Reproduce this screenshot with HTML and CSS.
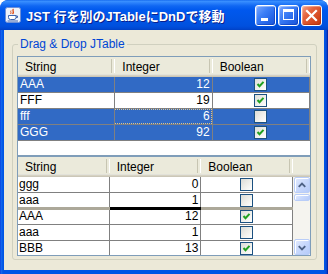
FILE: index.html
```html
<!DOCTYPE html>
<html lang="ja">
<head>
<meta charset="utf-8">
<link rel="stylesheet" href="styles.css">
</head>
<body>
<div class="window">
  <div class="titlebar">
    <svg class="app-icon" width="16" height="16" viewBox="0 0 16 16">
      <rect x="0.5" y="0.5" width="15" height="15" rx="2" fill="#EEF2FB" stroke="#6F8FD6"/>
      <path d="M8.5 2 C6.5 3.5 10 4.5 7.5 7" fill="none" stroke="#E0501A" stroke-width="1.4"/>
      <path d="M6 3.5 C5 5 7 5.5 5.5 7" fill="none" stroke="#E0501A" stroke-width="1"/>
      <path d="M3.5 8.5 H11 V10.5 A2 2 0 0 1 9 12.5 H5.5 A2 2 0 0 1 3.5 10.5 Z" fill="#fff" stroke="#4065B0" stroke-width="1"/>
      <path d="M11 9 H12.5 V10.5 H11" fill="none" stroke="#4065B0" stroke-width="1"/>
      <path d="M2.5 14 H13" stroke="#4065B0" stroke-width="1"/>
    </svg>
    <span class="title">JST 行を別のJTableにDnDで移動</span>
    <div class="controls">
      <div class="tbtn blue"><span class="min-glyph"></span></div>
      <div class="tbtn blue"><span class="max-glyph"></span></div>
      <div class="tbtn red">
        <svg class="x-glyph" width="19" height="19" viewBox="0 0 19 19">
          <path d="M5 5 L14 14 M14 5 L5 14" stroke="#fff" stroke-width="2.2" stroke-linecap="square"/>
        </svg>
      </div>
    </div>
  </div>
  <div class="client">
    <div class="group">
      <span class="legend">Drag &amp; Drop JTable</span>

      <div class="scrollpane">
        <div class="header">
          <div class="hcell">String</div>
          <div class="hcell">Integer</div>
          <div class="hcell">Boolean</div>
        </div>
        <div class="viewport">
          <div class="row sel"><div class="cell">AAA</div><div class="cell num">12</div><div class="cell bool"><span class="cb"><svg width="11" height="11" viewBox="0 0 11 11"><path d="M2.5 5 L4.5 7.2 L8.5 2.8" fill="none" stroke="#21A121" stroke-width="2"/></svg></span></div></div>
          <div class="row"><div class="cell">FFF</div><div class="cell num">19</div><div class="cell bool"><span class="cb"><svg width="11" height="11" viewBox="0 0 11 11"><path d="M2.5 5 L4.5 7.2 L8.5 2.8" fill="none" stroke="#21A121" stroke-width="2"/></svg></span></div></div>
          <div class="row sel"><div class="cell">fff</div><div class="cell num focus">6</div><div class="cell bool"><span class="cb"></span></div></div>
          <div class="row sel"><div class="cell">GGG</div><div class="cell num">92</div><div class="cell bool"><span class="cb"><svg width="11" height="11" viewBox="0 0 11 11"><path d="M2.5 5 L4.5 7.2 L8.5 2.8" fill="none" stroke="#21A121" stroke-width="2"/></svg></span></div></div>
        </div>
      </div>

      <div class="scrollpane">
        <div class="header with-corner">
          <div class="hcell">String</div>
          <div class="hcell">Integer</div>
          <div class="hcell">Boolean</div>
          <div class="corner"></div>
        </div>
        <div class="pane-body">
          <div class="viewport tight">
            <div class="row"><div class="cell">ggg</div><div class="cell num">0</div><div class="cell bool"><span class="cb"></span></div></div>
            <div class="row"><div class="cell">aaa</div><div class="cell num">1</div><div class="cell bool"><span class="cb"></span></div></div>
            <div class="row"><div class="cell">AAA</div><div class="cell num">12</div><div class="cell bool"><span class="cb"><svg width="11" height="11" viewBox="0 0 11 11"><path d="M2.5 5 L4.5 7.2 L8.5 2.8" fill="none" stroke="#21A121" stroke-width="2"/></svg></span></div></div>
            <div class="row"><div class="cell">aaa</div><div class="cell num">1</div><div class="cell bool"><span class="cb"></span></div></div>
            <div class="row"><div class="cell">BBB</div><div class="cell num">13</div><div class="cell bool"><span class="cb"><svg width="11" height="11" viewBox="0 0 11 11"><path d="M2.5 5 L4.5 7.2 L8.5 2.8" fill="none" stroke="#21A121" stroke-width="2"/></svg></span></div></div>
            <div class="dropline"><span class="dl-short"></span><span class="dl-lead"></span><span class="dl-short"></span></div>
          </div>
          <div class="vscroll">
            <div class="sb-btn"><svg width="15" height="15" viewBox="0 0 15 15"><path d="M4 9 L7.5 5.5 L11 9" fill="none" stroke="#4D6185" stroke-width="2"/></svg></div>
            <div class="sb-thumb"></div>
            <div class="sb-track"></div>
            <div class="sb-btn"><svg width="15" height="15" viewBox="0 0 15 15"><path d="M4 6 L7.5 9.5 L11 6" fill="none" stroke="#4D6185" stroke-width="2"/></svg></div>
          </div>
        </div>
      </div>
    </div>
  </div>
</div>
</body>
</html>
```

FILE: styles.css
```css
* { box-sizing: border-box; }
html, body { margin: 0; padding: 0; }
body {
  width: 328px;
  height: 274px;
  overflow: hidden;
  background: #ffffff;
  font-family: "Liberation Sans", "Noto Sans CJK JP", sans-serif;
}

.window {
  width: 328px;
  height: 274px;
  display: flex;
  flex-direction: column;
  background: linear-gradient(to right, #0831D9 0, #166AEE 1px, #0055E5 3px, #0055E5 325px, #0A3EC8 327px, #00138C 328px);
  border-radius: 8px 8px 0 0;
  overflow: hidden;
}

.titlebar {
  height: 30px;
  flex: none;
  display: flex;
  align-items: center;
  padding: 0 6px 0 5px;
  border-radius: 8px 8px 0 0;
  background: linear-gradient(to bottom, #0A5EEA 0, #3D93FF 1px, #2A80FB 3px, #0F66F2 6px, #0058EE 10px, #0054E4 20px, #0050DE 26px, #0046CF 29px, #0040C2 30px);
}

.app-icon { flex: none; margin-right: 5px; }

.title {
  color: #ffffff;
  font-weight: bold;
  font-size: 13px;
  white-space: nowrap;
  text-shadow: 1px 1px 0 #0A1E8C;
}

.controls {
  margin-left: auto;
  display: flex;
  gap: 2px;
}

.tbtn {
  width: 21px;
  height: 21px;
  border: 1px solid #ffffff;
  border-radius: 3px;
  position: relative;
}
.tbtn.blue {
  background: linear-gradient(135deg, #7CA8FF 0%, #3C7EF6 40%, #2463E6 75%, #1C56D8 100%);
  box-shadow: inset 1px 1px 0 rgba(255,255,255,0.35), inset -1px -1px 0 rgba(0,40,160,0.4);
}
.tbtn.red {
  background: linear-gradient(135deg, #F2A48A 0%, #E5643F 35%, #D2461D 75%, #C23A12 100%);
  box-shadow: inset 1px 1px 0 rgba(255,255,255,0.3), inset -1px -1px 0 rgba(140,30,0,0.35);
}
.min-glyph {
  position: absolute;
  left: 5px;
  top: 12px;
  width: 7px;
  height: 3px;
  background: #ffffff;
}
.max-glyph {
  position: absolute;
  left: 4px;
  top: 3px;
  width: 11px;
  height: 11px;
  border: 1px solid #ffffff;
  border-top-width: 3px;
}
.x-glyph { display: block; position: absolute; left: 0; top: 0; }

.client {
  flex: 1;
  margin: 0 4px 4px 4px;
  background: #ECE9D8;
  padding: 14px 7px 10px 8px;
  display: flex;
}

.group {
  flex: 1;
  position: relative;
  border: 1px solid #D0D0BF;
  border-radius: 3px;
  padding: 11px 5px 3px 4px;
  display: flex;
  flex-direction: column;
}

.legend {
  position: absolute;
  left: 5px;
  top: -8px;
  padding: 0 2px;
  background: #ECE9D8;
  color: #0046D5;
  font-size: 12px;
  line-height: 14px;
  white-space: nowrap;
}

.scrollpane {
  flex: 1;
  min-height: 0;
  border: 1px solid #7F9DB9;
  background: #ffffff;
  display: flex;
  flex-direction: column;
  overflow: hidden;
}

.header {
  height: 20px;
  flex: none;
  display: grid;
  grid-template-columns: 1fr 1fr 1fr;
  background: linear-gradient(to bottom, #EBEADB 0, #EBEADB 17px, #E2E2DA 17px, #E2E2DA 18px, #D6D2C2 18px, #D6D2C2 19px, #CBC7B8 19px);
  font-size: 12px;
  color: #000000;
}
.header.with-corner { grid-template-columns: 1fr 1fr 1fr 17px; }
.hcell {
  position: relative;
  padding: 3px 0 0 7px;
  line-height: 14px;
  white-space: nowrap;
}
.hcell::after {
  content: "";
  position: absolute;
  right: 0;
  top: 2px;
  height: 14px;
  width: 2px;
  border-left: 1px solid #C7C5B2;
  border-right: 1px solid #FFFFFF;
}

.viewport {
  flex: 1;
  min-height: 0;
  overflow: hidden;
  background: #ffffff;
  position: relative;
}

.row {
  display: grid;
  grid-template-columns: 1fr 1fr 1fr;
  height: 16px;
  font-size: 12px;
  color: #000000;
}
.row.sel { background: #316AC5; color: #ffffff; }

.cell {
  position: relative;
  height: 16px;
  border-right: 1px solid #808080;
  border-bottom: 1px solid #808080;
  padding: 0 2px;
  line-height: 14px;
  white-space: nowrap;
  overflow: hidden;
}
.tight .cell { padding: 0 2px 0 1px; }
.cell.num { text-align: right; padding-right: 2px; }
.cell.bool {
  display: flex;
  justify-content: center;
  padding: 1px 0 0 0;
}
.cell.focus::before {
  content: "";
  position: absolute;
  left: -1px;
  top: 0;
  right: 0;
  bottom: 0;
  border: 1px dotted #D8C493;
}

.cb {
  width: 13px;
  height: 13px;
  border: 1px solid #1C5180;
  background: linear-gradient(135deg, #DCDCD7 0%, #F2F2EE 60%, #FFFFFF 100%);
  display: block;
}
.cb svg { display: block; }

.pane-body {
  flex: 1;
  min-height: 0;
  display: flex;
}

.dropline {
  position: absolute;
  left: 0;
  right: 0;
  top: 30px;
  height: 3px;
  display: grid;
  grid-template-columns: 1fr 1fr 1fr;
}
.dl-short { background: #ACA899; }
.dl-lead { background: #000000; }

.vscroll {
  width: 17px;
  flex: none;
  display: flex;
  flex-direction: column;
  background: #F5F4EF;
  padding: 0 0 0 1px;
}
.sb-btn, .sb-thumb {
  border: 1px solid #B9CDF8;
  border-radius: 2px;
  background: linear-gradient(135deg, #E3EBFE 0%, #C8D8FC 50%, #B6CBF9 100%);
  box-shadow: inset 1px 1px 0 #FFFFFF;
}
.sb-btn {
  height: 16px;
  flex: none;
  display: flex;
  align-items: center;
  justify-content: center;
}
.sb-btn svg { display: block; }
.sb-thumb {
  height: 7px;
  flex: none;
  margin-top: 1px;
}
.sb-track { flex: 1; }
```
